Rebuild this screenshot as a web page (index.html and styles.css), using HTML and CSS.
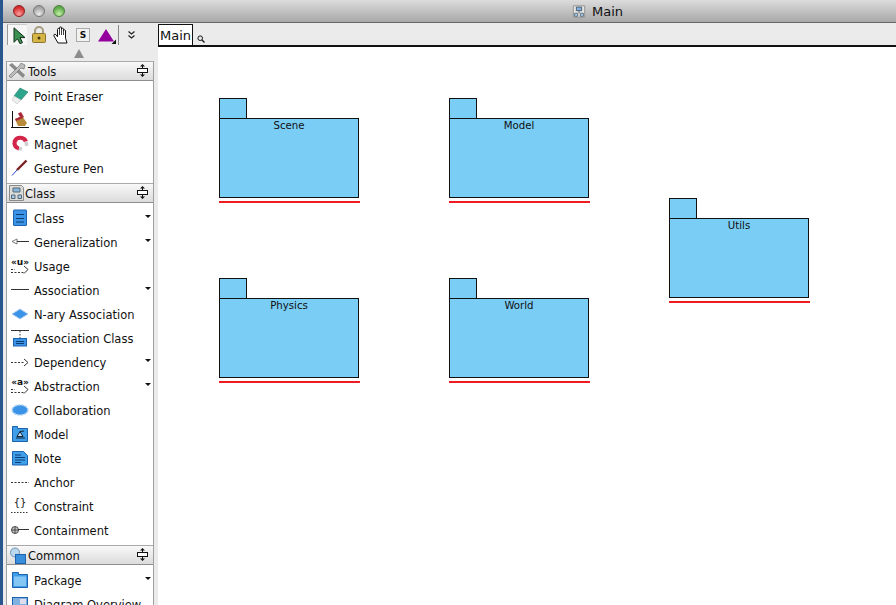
FILE: index.html
```html
<!DOCTYPE html>
<html lang="en">
<head>
<meta charset="utf-8">
<title>Main</title>
<link rel="stylesheet" href="styles.css">
</head>
<body>
<div class="window">
  <header class="titlebar">
    <div class="lights">
      <span class="light red"></span><span class="light grey"></span><span class="light green"></span>
    </div>
    <div class="title">
      <svg class="i16" viewBox="0 0 16 16"><path d="M1.500 1.500h13v13h-13z" fill="#e4e4e0" stroke="#8d8d8d"/><path d="M5 3h6v4H5z" fill="#7fb2e0" stroke="#456"/><path d="M3 10h3.500v3.500H3zM9.500 10H13v3.500H9.500z" fill="#a9cdea" stroke="#567"/><path d="M8 7v3" stroke="#456"/></svg>
      <span class="title-text">Main</span>
    </div>
  </header>
  <div class="main">
    <aside class="side">
      <div class="toolbar">
        <div class="tools">
          <span class="tool sel"><svg viewBox="0 0 13 17" class="i-arrow"><path d="M1 .8v14.500l3.500-3.500 2.500 5 2.500-1.200-2.500-5h5z" fill="#3d9150" stroke="#10301c"/></svg></span>
          <span class="tool lock"><svg viewBox="0 0 14 17" class="i-lock"><path d="M3 8V5a4 4 0 0 1 8 0v3" fill="none" stroke="#a49c80" stroke-width="2"/><rect x=".5" y="7.500" width="13" height="9" rx="1" fill="#d4b545" stroke="#8a7430"/><circle cx="7" cy="12" r="1.500" fill="#4a3a10"/></svg></span>
          <span class="tool hand"><svg viewBox="0 0 17 18" class="i-hand"><path d="M5 17 1 10c-.8-1.500 1-2.500 2-1.200l1.500 2V3.500c0-1.400 1.800-1.400 2 0V2c0-1.500 2-1.500 2 0v1.200c0-1.400 2-1.400 2 0v1.500c0-1.300 2-1.300 2 0v7.500L14 17z" fill="#fff" stroke="#111"/><path d="M6.500 4v5M8.500 3v6M10.500 4v5M12.500 5v4" stroke="#111" stroke-width=".8"/></svg></span>
          <span class="s-btn">S</span>
          <span class="tool tri"><svg viewBox="0 0 18 15" class="i-tri"><path d="M8 0 16 12.500H0z" fill="#93009e"/><path d="M13.500 15H18v-4.500z" fill="#111"/></svg></span>
          <span class="sep"></span>
          <svg class="more" viewBox="0 0 7 8"><path d="m.5.500 3 2.500 3-2.500M.5 4.500l3 2.500 3-2.500" fill="none" stroke="#222" stroke-width="1.200"/></svg>
        </div>
        <div class="grip"></div>
      </div>

      <div class="panel">
        <div class="phead">
          <svg class="i-head h-tools" viewBox="0 0 18 16"><path d="M1 2 4 0l13 12-2 3z" fill="#8a8a8a"/><path d="M17 2l-4-2-2 3L1 13l2 2L13 5l3 1z" fill="#bdbdbd" stroke="#666" stroke-width=".6"/></svg>
          <span class="ptitle">Tools</span>
          <svg class="resize" viewBox="0 0 11 13"><path d="M5.500 0 3 2.500h5zM5.500 13 3 10.500h5z" fill="#111"/><path d="M5.500 2v2M5.500 9v2" stroke="#111"/><rect x=".5" y="4.500" width="10" height="4" fill="#fff" stroke="#111"/></svg>
        </div>
        <ul class="list">
          <li><svg class="ico" viewBox="0 0 18 18"><path d="M9 1l8 4-7 8-7-4z" fill="#2da58c" stroke="#1d6d5d" stroke-width=".5"/><path d="M3 9l7 4-4 4-5-4z" fill="#eee" stroke="#bbb" stroke-width=".5"/></svg><span>Point Eraser</span></li>
          <li><svg class="ico" viewBox="0 0 18 18"><path d="M1.500 0v17M0 16.500h18" fill="none" stroke="#111"/><path d="M7 2.500 10 1l3 5-3 2z" fill="#a8283c"/><path d="M4 8l7-3 5 7-2 3H7z" fill="#b98a3a"/><path d="M4 8l7-3 1 2-7 3z" fill="#a8283c"/></svg><span>Sweeper</span></li>
          <li><svg class="ico" viewBox="0 0 18 18"><path d="M14.800 6.500C13.500 1.800 5.500 1.200 3.700 6.500 2.700 10 5 13 8 13.500" fill="none" stroke="#d3264a" stroke-width="4.200"/><path d="M15 7l.8 3.800M8 13.500l3 .5" fill="none" stroke="#cfcfcf" stroke-width="3.600"/></svg><span>Magnet</span></li>
          <li><svg class="ico" viewBox="0 0 18 18"><path d="M15.500 1.500 6 11" stroke="#7a2226" stroke-width="2.400"/><path d="M6 11 1 16.500" stroke="#2a4ad0" stroke-width="1"/></svg><span>Gesture Pen</span></li>
        </ul>
      </div>

      <div class="panel">
        <div class="phead">
          <svg class="i-head h-class" viewBox="0 0 15 16"><path d="M.5 .5h12l2 2v13H.5z" fill="#dcdcd8" stroke="#8a8a8a"/><path d="M4 3h7v4H4z" fill="#8ab8e0" stroke="#567"/><path d="M2.500 10h3.500v3.500H2.500zM9 10h3.500v3.500H9z" fill="#a8cbe8" stroke="#567"/></svg>
          <span class="ptitle">Class</span>
          <svg class="resize" viewBox="0 0 11 13"><path d="M5.500 0 3 2.500h5zM5.500 13 3 10.500h5z" fill="#111"/><path d="M5.500 2v2M5.500 9v2" stroke="#111"/><rect x=".5" y="4.500" width="10" height="4" fill="#fff" stroke="#111"/></svg>
        </div>
        <ul class="list">
          <li class="drop"><svg class="ico" viewBox="0 0 18 18"><rect x="2.500" y="1" width="13" height="15.500" rx=".5" fill="#3a93e6" stroke="#1d62ad"/><path d="M5 5.500h8M5 9.500h8M5 13h8" stroke="#0d3c70"/></svg><span>Class</span></li>
          <li class="drop"><svg class="ico" viewBox="0 0 18 18"><path d="M6 6v5L1 8.500z" fill="#fff" stroke="#777"/><path d="M6 8.500h12" stroke="#333"/></svg><span>Generalization</span></li>
          <li><svg class="ico" viewBox="0 0 18 18"><path d="M0 12.500h4M0 15.500h14" stroke="#333" stroke-dasharray="2 1.500"/><path d="m13 9 4 3.500-4 4" fill="none" stroke="#333"/></svg><span class="tag">«u»</span><span>Usage</span></li>
          <li class="drop"><svg class="ico" viewBox="0 0 18 18"><path d="M0 8.500h18" stroke="#333"/></svg><span>Association</span></li>
          <li><svg class="ico" viewBox="0 0 18 18"><path d="m1 9 8-5 8 5-8 5z" fill="#3a93e6" stroke="#a9cdf0"/></svg><span>N-ary Association</span></li>
          <li><svg class="ico" viewBox="0 0 18 18"><path d="M0 1.500h18" stroke="#333"/><path d="M9 2v7" stroke="#333" stroke-dasharray="1.500 1.500"/><rect x="2.500" y="9.500" width="13" height="7.500" fill="#3a93e6" stroke="#1d62ad"/><path d="M5 12.500h8M5 14.500h8" stroke="#0d3c70"/></svg><span>Association Class</span></li>
          <li class="drop"><svg class="ico" viewBox="0 0 18 18"><path d="M0 9.500h14" stroke="#333" stroke-dasharray="2 1.500"/><path d="m13 6 4 3.500-4 3.500" fill="none" stroke="#333"/></svg><span>Dependency</span></li>
          <li class="drop"><svg class="ico" viewBox="0 0 18 18"><path d="M0 12.500h4M0 15.500h14" stroke="#333" stroke-dasharray="2 1.500"/><path d="m13 9 4 3.500-4 4" fill="none" stroke="#333"/></svg><span class="tag">«a»</span><span>Abstraction</span></li>
          <li><svg class="ico" viewBox="0 0 18 18"><ellipse cx="9" cy="9" rx="7.800" ry="5" fill="#3a93e6" stroke="#a9cdf0" stroke-width="1.500" stroke-dasharray="2.500 1"/></svg><span>Collaboration</span></li>
          <li><svg class="ico" viewBox="0 0 18 18"><path d="M1.500 1.500h5v2h10v13h-15z" fill="#3f9eea" stroke="#1d62ad"/><path d="m9 6.500 3 5H6zM5 13h9M13 6l-4 .5" fill="#bfe0f8" stroke="#123"/></svg><span>Model</span></li>
          <li><svg class="ico" viewBox="0 0 18 18"><path d="M1.500 2.500h11l4 4v9.500h-15z" fill="#3f9eea" stroke="#1d62ad"/><path d="M4 6h6M4 8.500h10M4 11h10M4 13.500h6" stroke="#0d3c70"/></svg><span>Note</span></li>
          <li><svg class="ico" viewBox="0 0 18 18"><path d="M0 9.500h18" stroke="#333" stroke-dasharray="2 1.500"/></svg><span>Anchor</span></li>
          <li><svg class="ico" viewBox="0 0 18 18"><path d="M0 15.500h18" stroke="#333" stroke-dasharray="1.500 1.500"/></svg><span class="tag curly">{}</span><span>Constraint</span></li>
          <li><svg class="ico" viewBox="0 0 18 18"><circle cx="4" cy="9" r="3.500" fill="#ccc" stroke="#444"/><path d="M1 9h6M4 6v6" stroke="#444"/><path d="M7 8.500h11" stroke="#333"/></svg><span>Containment</span></li>
        </ul>
      </div>

      <div class="panel">
        <div class="phead">
          <svg class="i-head h-common" viewBox="0 0 16 17"><circle cx="5" cy="5.500" r="4.500" fill="#bcd8ef" stroke="#6f93b3"/><rect x="5.500" y="7.500" width="10" height="9" fill="#3a8fdc" stroke="#1d62ad"/></svg>
          <span class="ptitle">Common</span>
          <svg class="resize" viewBox="0 0 11 13"><path d="M5.500 0 3 2.500h5zM5.500 13 3 10.500h5z" fill="#111"/><path d="M5.500 2v2M5.500 9v2" stroke="#111"/><rect x=".5" y="4.500" width="10" height="4" fill="#fff" stroke="#111"/></svg>
        </div>
        <ul class="list">
          <li class="drop"><svg class="ico" viewBox="0 0 18 18"><path d="M1.500 1.500h6v2h9v13h-15z" fill="#3f9eea" stroke="#1d62ad"/><path d="M3 5.500h12v9.500H3z" fill="#86c6f2"/></svg><span>Package</span></li>
          <li><svg class="ico" viewBox="0 0 18 18"><rect x="1.500" y="2.500" width="15" height="14" fill="#7fb2e0" stroke="#1d62ad"/><rect x="9" y="4" width="6" height="5" fill="#dde"/></svg><span>Diagram Overview</span></li>
        </ul>
      </div>
    </aside>

    <section class="editor">
      <div class="tabs">
        <span class="tab">Main</span>
        <svg class="search" viewBox="0 0 8 8"><circle cx="3.200" cy="3.200" r="2.300" fill="none" stroke="#111"/><path d="m5 5 2.500 2.500" stroke="#111" stroke-width="1.200"/></svg>
      </div>
      <div class="canvas">
        <div class="pkg p-scene"><div class="pkg-tab"></div><div class="pkg-body">Scene</div><div class="pkg-line"></div></div>
        <div class="pkg p-model"><div class="pkg-tab"></div><div class="pkg-body">Model</div><div class="pkg-line"></div></div>
        <div class="pkg p-utils"><div class="pkg-tab"></div><div class="pkg-body">Utils</div><div class="pkg-line"></div></div>
        <div class="pkg p-physics"><div class="pkg-tab"></div><div class="pkg-body">Physics</div><div class="pkg-line"></div></div>
        <div class="pkg p-world"><div class="pkg-tab"></div><div class="pkg-body">World</div><div class="pkg-line"></div></div>
      </div>
    </section>
  </div>
</div>
</body>
</html>
```
FILE: styles.css
```css
* { box-sizing: border-box; }
html, body { margin: 0; padding: 0; }
body {
  width: 896px;
  height: 605px;
  overflow: hidden;
  background: #2a5690;
  font-family: "DejaVu Sans", sans-serif;
  font-size: 12px;
  color: #111;
}
.window {
  margin-left: 3px;
  width: 893px;
  height: 605px;
  display: flex;
  flex-direction: column;
  background: #ebebeb;
  overflow: hidden;
}
.titlebar {
  height: 23px;
  flex: none;
  display: flex;
  align-items: center;
  position: relative;
  background: linear-gradient(#dcdcdc, #a8a8a8);
  border-bottom: 1px solid #666;
}
.lights { display: flex; gap: 8px; margin-left: 10px; }
.light { width: 12px; height: 12px; border-radius: 50%; border: 1px solid #777; }
.red { background: radial-gradient(circle at 50% 80%, #ff9f9f, #d42c2c 70%); border-color: #8e2020; }
.grey { background: radial-gradient(circle at 50% 80%, #ececec, #a2a2a2 70%); }
.green { background: radial-gradient(circle at 50% 80%, #c4f2a6, #5ca84a 70%); border-color: #4f7f40; }
.title {
  position: absolute;
  left: 569px;
  top: 3px;
  display: flex;
  align-items: center;
  gap: 6px;
  line-height: 17px;
}
.title-text { font-size: 13px; }
.i16 { width: 14px; height: 15px; }
.main { flex: 1; display: flex; min-height: 0; }
.side { width: 155px; flex: none; display: flex; flex-direction: column; }
.toolbar { height: 38px; flex: none; padding: 1px 0 0 4px; }
.tools { display: flex; align-items: center; height: 21px; }
.tool { display: flex; align-items: center; justify-content: center; height: 21px; }
.tool.sel {
  width: 20px;
  background: #f6f6f6;
  border-left: 1px solid #999;
  border-top: 1px solid #ccc;
  padding-left: 3px;
}
.lock { margin-left: 5px; width: 14px; }
.hand { margin-left: 7px; width: 17px; }
.tri { margin-left: 8px; width: 18px; padding-top: 3px; }
.i-arrow { width: 13px; height: 17px; }
.i-lock { width: 14px; height: 17px; }
.i-hand { width: 17px; height: 18px; }
.i-tri { width: 18px; height: 15px; }
.s-btn {
  width: 14px;
  height: 14px;
  margin-left: 6px;
  border: 1px solid #aaa;
  background: #f2f2f2;
  font-size: 9px;
  font-weight: bold;
  line-height: 12px;
  text-align: center;
}
.sep { width: 1px; height: 20px; background: #888; margin-left: 2px; }
.more { width: 7px; height: 8px; margin-left: 9px; }
.grip {
  width: 0; height: 0;
  margin: 4px 0 0 67px;
  border-left: 5.5px solid transparent;
  border-right: 5.5px solid transparent;
  border-bottom: 9px solid #8c8c8c;
}
.panel { margin-left: 3px; width: 148px; flex: none; border-left: 1px solid #a0a0a0; border-right: 1px solid #a0a0a0; background: #fff; }
.phead {
  height: 20px;
  display: flex;
  align-items: center;
  background: linear-gradient(#f8f8f8, #dcdcdc);
  border-top: 1px solid #aaa;
  border-bottom: 1px solid #8e8e8e;
  position: relative;
}
.i-head { flex: none; }
.h-tools { width: 18px; height: 16px; margin-left: 1px; margin-right: 2px; }
.h-class { width: 15px; height: 16px; margin-left: 2px; margin-right: 1px; }
.h-common { width: 16px; height: 17px; margin-left: 3px; margin-right: 2px; }
.ptitle { font-size: 11.500px; line-height: 18px; padding-top: 2px; }
.resize { position: absolute; right: 5px; top: 2px; width: 11px; height: 13px; }
.list { list-style: none; margin: 0; padding: 3px 0; background: #fff; }
.list li {
  height: 24px;
  display: flex;
  align-items: center;
  position: relative;
  padding-left: 4px;
  font-size: 11.500px;
}
.list li > span:last-child { padding-top: 2px; }
.ico { width: 18px; height: 18px; flex: none; margin-right: 5px; }
.tag { position: absolute; left: 4px; top: 3px; width: 18px; text-align: center; font-size: 9px; font-weight: bold; line-height: 10px; }
.tag.curly { left: 4px; top: 4px; font-size: 10px; font-weight: normal; }
.drop::after {
  content: "";
  position: absolute;
  right: 2px;
  top: 9px;
  border-left: 3px solid transparent;
  border-right: 3px solid transparent;
  border-top: 3px solid #111;
}
.editor { flex: 1; display: flex; flex-direction: column; min-width: 0; }
.tabs { height: 24px; flex: none; display: flex; align-items: flex-end; border-bottom: 2px solid #111; }
.tab {
  width: 35px;
  height: 21px;
  background: #fff;
  border: 1px solid #111;
  border-bottom: none;
  font-size: 13px;
  line-height: 21px;
  text-align: center;
}
.search { width: 8px; height: 8px; margin: 0 0 2px 4px; }
.canvas { flex: 1; background: #fff; position: relative; }
.pkg { position: absolute; width: 141px; height: 106px; }
.p-scene { left: 61px; top: 51px; }
.p-model { left: 291px; top: 51px; }
.p-utils { left: 511px; top: 151px; }
.p-physics { left: 61px; top: 231px; }
.p-world { left: 291px; top: 231px; }
.pkg-tab { width: 28px; height: 20px; background: #7acdf5; border: 1px solid #111; border-bottom: none; }
.pkg-body {
  width: 140px;
  height: 80px;
  background: #7acdf5;
  border: 1px solid #111;
  font-size: 10.200px;
  line-height: 11px;
  padding-top: 1px;
  text-align: center;
}
.pkg-line { width: 141px; height: 2px; margin-top: 3px; background: #f01c24; }
```
